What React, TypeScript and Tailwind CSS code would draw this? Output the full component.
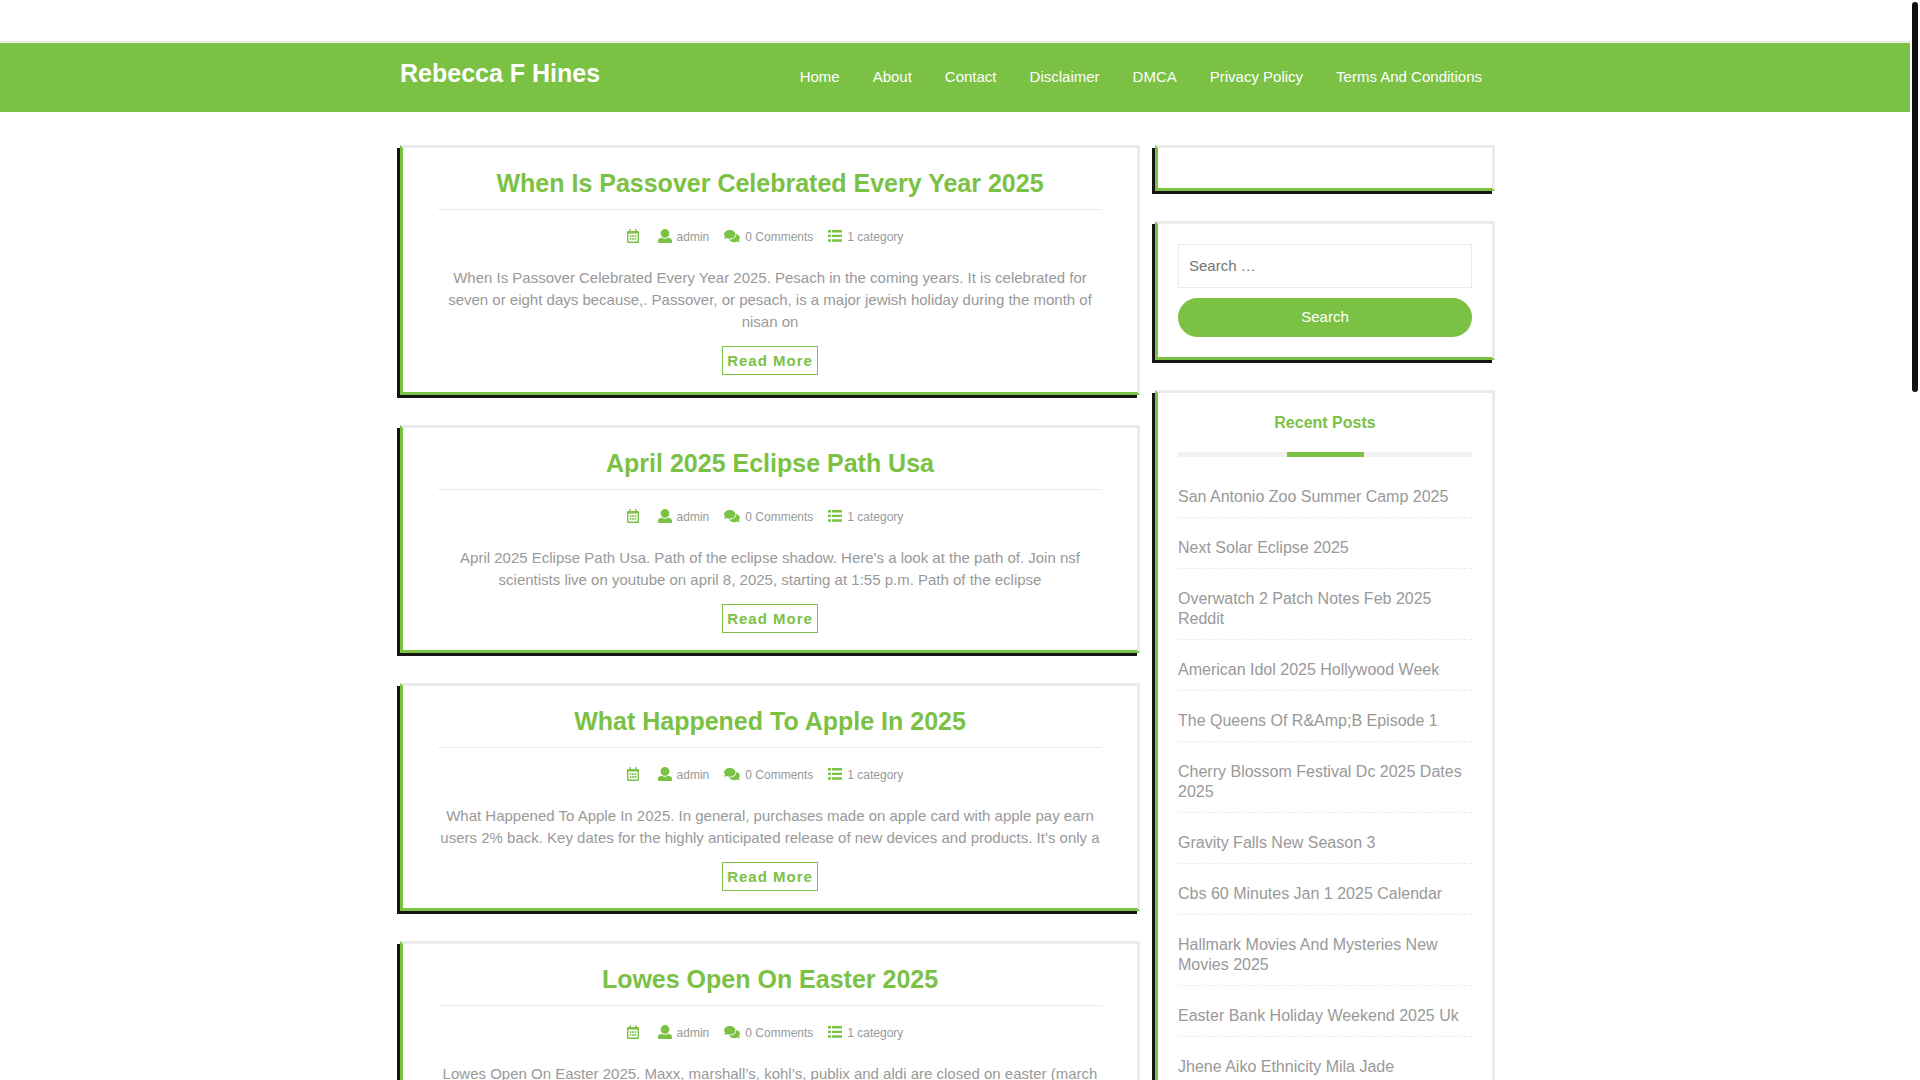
import type { ReactNode } from 'react';
import { FaComments } from 'react-icons/fa';

const navLinks = ['Home', 'About', 'Contact', 'Disclaimer', 'DMCA', 'Privacy Policy', 'Terms And Conditions'];

const posts = [
  {
    title: 'When Is Passover Celebrated Every Year 2025',
    text: 'When Is Passover Celebrated Every Year 2025. Pesach in the coming years. It is celebrated for seven or eight days because,. Passover, or pesach, is a major jewish holiday during the month of nisan on',
  },
  {
    title: 'April 2025 Eclipse Path Usa',
    text: "April 2025 Eclipse Path Usa. Path of the eclipse shadow. Here's a look at the path of. Join nsf scientists live on youtube on april 8, 2025, starting at 1:55 p.m. Path of the eclipse",
  },
  {
    title: 'What Happened To Apple In 2025',
    text: 'What Happened To Apple In 2025. In general, purchases made on apple card with apple pay earn users 2% back. Key dates for the highly anticipated release of new devices and products. It’s only a',
  },
  {
    title: 'Lowes Open On Easter 2025',
    text: 'Lowes Open On Easter 2025. Maxx, marshall’s, kohl’s, publix and aldi are closed on easter (march',
  },
];

const recentPosts = [
  'San Antonio Zoo Summer Camp 2025',
  'Next Solar Eclipse 2025',
  'Overwatch 2 Patch Notes Feb 2025 Reddit',
  'American Idol 2025 Hollywood Week',
  'The Queens Of R&Amp;B Episode 1',
  'Cherry Blossom Festival Dc 2025 Dates 2025',
  'Gravity Falls New Season 3',
  'Cbs 60 Minutes Jan 1 2025 Calendar',
  'Hallmark Movies And Mysteries New Movies 2025',
  'Easter Bank Holiday Weekend 2025 Uk',
  'Jhene Aiko Ethnicity Mila Jade',
];

function CalendarIcon() {
  return (
    <svg viewBox="0 0 12 14" className="h-3.5 w-3 fill-[#7ac144]" aria-hidden="true">
      <path
        fillRule="evenodd"
        d="M2.5 0h1.3v2h4.4V0h1.3v2h1.2A1.3 1.3 0 0 1 12 3.3v9.4a1.3 1.3 0 0 1-1.3 1.3H1.3A1.3 1.3 0 0 1 0 12.7V3.3A1.3 1.3 0 0 1 1.3 2h1.2zM1.4 4.6v8h9.2v-8z"
      />
      <path d="M2.7 6.2h1.7v1.7H2.7zM5.15 6.2h1.7v1.7h-1.7zM7.6 6.2h1.7v1.7H7.6zM2.7 9h1.7v1.7H2.7zM5.15 9h1.7v1.7h-1.7zM7.6 9h1.7v1.7H7.6z" />
    </svg>
  );
}

function UserIcon() {
  return (
    <svg viewBox="0 0 512 512" className="size-3.5 fill-[#7ac144]" aria-hidden="true">
      <path d="M256 0c88.366 0 160 71.634 160 160s-71.634 160-160 160S96 248.366 96 160 167.634 0 256 0zm183.283 333.821l-71.313-17.828c-74.923 53.89-165.738 41.864-223.94 0l-71.313 17.828C29.981 344.505 0 382.903 0 426.955V464c0 26.51 21.49 48 48 48h416c26.51 0 48-21.49 48-48v-37.045c0-44.052-29.981-82.45-72.717-93.134z" />
    </svg>
  );
}

function ListIcon() {
  return (
    <svg viewBox="0 0 14 14" className="size-3.5 fill-[#7ac144]" aria-hidden="true">
      <path d="M0 1h3v2.4H0zM4 1h10v2.4H4zM0 5.7h3v2.4H0zM4 5.7h10v2.4H4zM0 10.3h3v2.4H0zM4 10.3h10v2.4H4z" />
    </svg>
  );
}

function Meta({ icon, children }: { icon: ReactNode; children: ReactNode }) {
  return (
    <span className="flex items-center gap-[5px]">
      {icon}
      <span className="pt-0.5">{children}</span>
    </span>
  );
}

function Panel({ children }: { children?: ReactNode }) {
  return (
    <section className="border-3 border-[#ebebeb] border-b-[#7ac144] border-l-[#7ac144] p-5 shadow-[-3px_3px_0_#151515]">
      {children}
    </section>
  );
}

function Post({ title, text }: { title: string; text: string }) {
  return (
    <article className="border-3 border-[#ebebeb] border-b-[#7ac144] border-l-[#7ac144] px-[35px] pt-5 pb-[17px] text-center shadow-[-3px_3px_0_#151515]">
      <h2 className="border-b border-[#ebebeb] pb-[11px] text-[25px] leading-[30px] font-bold text-[#7ac144]">
        <a href="#">{title}</a>
      </h2>
      <div className="flex h-[57px] items-center justify-center pr-2.5 pb-1.5 text-xs leading-4">
        <div className="flex items-center gap-[19px]">
          <CalendarIcon />
          <div className="flex gap-[15px]">
            <Meta icon={<UserIcon />}>
              <a href="#">admin</a>
            </Meta>
            <Meta icon={<FaComments className="h-3.5 w-4 text-[#7ac144]" />}>0 Comments</Meta>
            <Meta icon={<ListIcon />}>1 category</Meta>
          </div>
        </div>
      </div>
      <p className="text-[15px] leading-[22px]">{text}</p>
      <a
        href="#"
        className="mt-[13px] inline-block border border-[#7ac144] px-1 py-[3px] align-top text-[15px] leading-[21px] font-bold tracking-[1px] text-[#7ac144]"
      >
        Read More
      </a>
    </article>
  );
}

export default function App() {
  return (
    <div className="h-screen overflow-y-auto bg-white pr-2.5 font-['Liberation_Sans',Arial,sans-serif] text-[#999] [scrollbar-width:none]">
      <div className="fixed top-0.5 right-0.5 h-[390px] w-1.5 rounded-full bg-[#111]" />
      <header className="mt-[41px] border-t-2 border-[#ebebeb] bg-[#7ac144] text-white">
        <div className="mx-auto flex min-h-[69px] max-w-[1110px] items-center justify-between pb-0.5">
          <h1 className="pb-2 text-[25px] leading-[30px] font-bold">
            <a href="#">Rebecca F Hines</a>
          </h1>
          <nav className="flex gap-[33px] pr-7 text-[15px] leading-5">
            {navLinks.map((link) => (
              <a key={link} href="#">
                {link}
              </a>
            ))}
          </nav>
        </div>
      </header>

      <div className="mx-auto flex max-w-[1110px] items-start gap-[15px] pt-[33px] pr-[15px]">
        <main className="flex min-w-0 flex-1 flex-col gap-[30px]">
          {posts.map((post) => (
            <Post key={post.title} {...post} />
          ))}
        </main>

        <aside className="flex w-[340px] flex-col gap-[30px]">
          <Panel />
          <Panel>
            <form onSubmit={(event) => event.preventDefault()} className="flex flex-col gap-2.5 text-[15px]">
              <input
                type="search"
                aria-label="Search"
                placeholder="Search …"
                className="h-11 w-full border border-[#ebebeb] px-2.5 pb-0.5 placeholder:text-[#757575]"
              />
              <button type="submit" className="h-[39px] rounded-full bg-[#7ac144] text-white">
                Search
              </button>
            </form>
          </Panel>
          <Panel>
            <h2 className="text-center text-base leading-5 font-bold text-[#7ac144]">Recent Posts</h2>
            <div className="mt-[19px] h-[5px] bg-[#f1f1f1]">
              <div className="mx-auto h-full w-[77px] bg-[#7ac144]" />
            </div>
            <ul className="pt-2.5 text-base leading-5">
              {recentPosts.map((post) => (
                <li key={post} className="border-b border-dashed border-[#ebebeb] pt-5 pb-2.5">
                  <a href="#">{post}</a>
                </li>
              ))}
            </ul>
          </Panel>
        </aside>
      </div>
    </div>
  );
}
